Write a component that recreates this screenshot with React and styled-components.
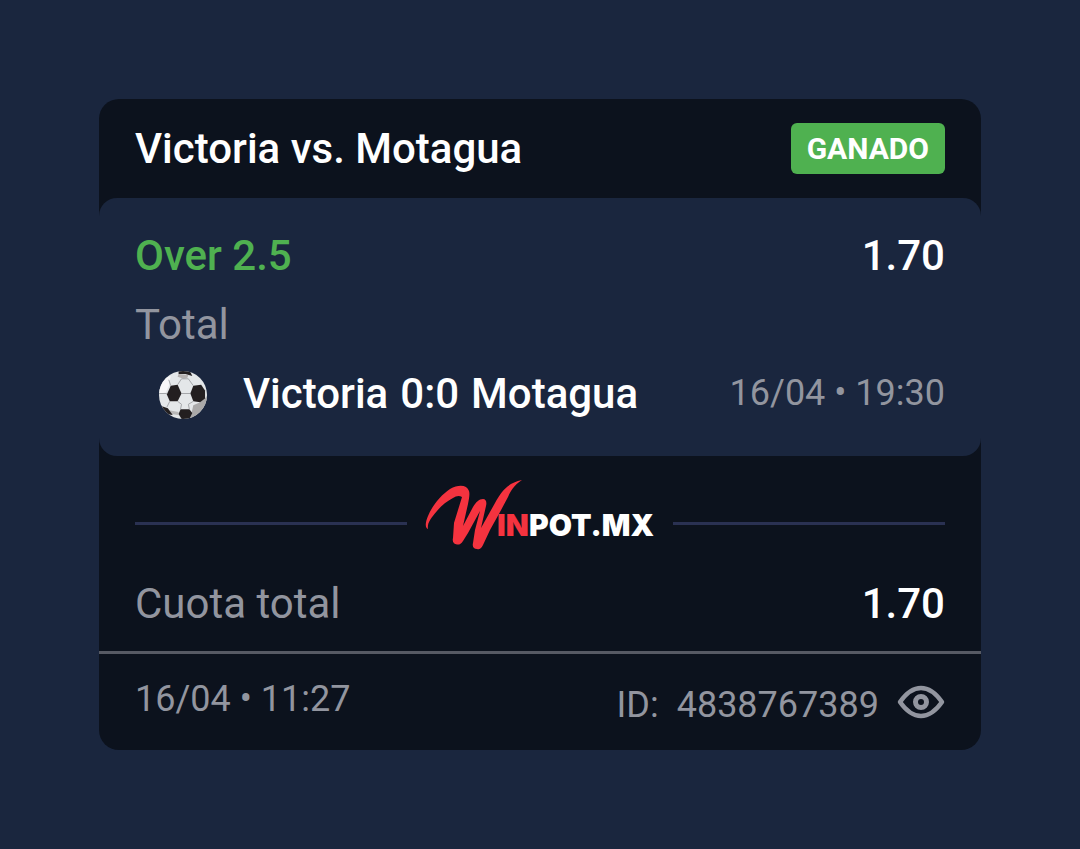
import React from "react";
import styled, { createGlobalStyle } from "styled-components";

const GlobalStyles = createGlobalStyle`
  :root {
    --bg: #1a263e;
    --dark: #0c121d;
    --green: #4fb150;
    --muted: #92959f;
    --rule: #575a64;
    --line: #2a3152;
  }

  * {
    box-sizing: border-box;
  }

  body {
    margin: 0;
    background-color: var(--bg);
    color: white;
    font-family: Roboto, "Liberation Sans", sans-serif;
  }
`;

const Page = styled.main`
  min-height: 100vh;
  padding: 99px;
`;

const Card = styled.article`
  border-radius: 20px;
  background-color: var(--dark);
  overflow: hidden;
`;

const Row = styled.div`
  display: flex;
  align-items: center;
  justify-content: space-between;
`;

const Header = styled(Row)`
  padding: 24px 36px;
`;

const Title = styled.h1`
  margin: 0;
  font-size: 42px;
  line-height: 48px;
  font-weight: 500;
`;

const Badge = styled.span`
  padding: 8px 16px;
  border-radius: 6px;
  background-color: var(--green);
  font-size: 30px;
  line-height: 35px;
  font-weight: 700;
`;

const Selection = styled.section`
  display: flex;
  flex-direction: column;
  gap: 21px;
  padding: 34px 36px 38px;
  border-radius: 18px;
  background-color: var(--bg);
`;

const Label = styled.span`
  color: ${({ $color }) => $color || "white"};
  font-size: 42px;
  line-height: 48px;
  font-weight: ${({ $light }) => ($light ? 400 : 500)};
`;

const Small = styled.span`
  color: var(--muted);
  font-size: 36px;
  line-height: 46px;
`;

const MatchRow = styled(Row)`
  align-items: flex-start;
`;

const Match = styled.div`
  display: flex;
  align-items: center;
  gap: 36px;
  padding-left: 24px;
`;

const Teams = styled.div`
  display: flex;
  gap: 12px;
`;

const Brand = styled.div`
  display: flex;
  align-items: center;
  gap: 18px;
  padding: 24px 36px 0;

  &::before,
  &::after {
    content: "";
    flex: 1;
    height: 3px;
    background-color: var(--line);
  }
`;

const Totals = styled(Row)`
  padding: 13px 36px 23px;
  border-bottom: 3px solid var(--rule);
`;

const Footer = styled(Row)`
  align-items: flex-start;
  padding: 22px 36px;
`;

const Ticket = styled.div`
  display: flex;
  align-items: center;
  gap: 18px;
  padding-top: 6px;
`;

const EyeButton = styled.button`
  display: flex;
  padding: 0;
  border: none;
  background: none;
  color: var(--muted);
  cursor: pointer;
`;

function Ball() {
  return (
    <svg width="48" height="48" viewBox="0 0 49 49" overflow="visible" aria-hidden="true">
      <defs>
        <clipPath id="ball">
          <circle cx="24.5" cy="25.5" r="24.5" />
        </clipPath>
      </defs>
      <g clipPath="url(#ball)">
        <rect width="49" height="50" fill="#e4e7e9" />
        <path d="M0 10L12 6L10 16L7 23L0 24Z" fill="#f7f7f8" />
        <path d="M35 36L42 33L49 27V49H30L33 45Z" fill="#aaa9a9" />
        <path d="M20 4L30 5L29 8L25 9L19 7Z" fill="#b5b1b0" />
        <path d="M10 41L20 43L20 46L12 45Z" fill="#b9b8b8" />
        <g fill="#231f20">
          <path d="M12 16L19 15L23 24L19 32L11 32L8 25Z" />
          <path d="M35 16L43 15L47 21L47 29L42 33L35 32L32 24Z" />
          <path d="M22 40L31 40L34 44L31 50H23L20 45Z" />
          <path d="M20 0H31L34 6L27 4L20 4Z" />
          <path d="M3 37L9 39L14 46L6 45Z" />
        </g>
        <path
          d="M19 15L23 9H30L35 16M23 24H32M19 32L23 35L22 40M35 32L30 35L31 40M11 32L8 38M12 16L10 10M0 24H8"
          fill="none"
          stroke="#a3a5a8"
          strokeWidth="1"
        />
      </g>
    </svg>
  );
}

function Logo() {
  return (
    <svg width="230" height="87" viewBox="0 0 230 87" role="img" aria-label="Winpot.mx">
      <path
        d="M3 49C0 48 0 43 3 36C7 26 16 15 25 9C34 4 42 5 44 11C45 14 44 19 43 24L38 46L48 27C51 22 54 19 58 19C61 19 62 22 61 26L56 48L70 23C76 12 82 3 97 0C89 5 85 12 83 17L75 32L65 50L58 65C56 69 54 70 52 69C49 69 47 67 48 63L50 50L55 31L43 53L38 61C36 64 34 65 32 64.500C29 64 27 62 28 58L29 43L37 17C34 15 31 16 28 18C22 21 16 26 12 31C6 38 2 43 3 49Z"
        fill="#f5333f"
      />
      <text y="56" fontFamily="Inter, sans-serif" fontWeight="900" fontSize="30">
        <tspan x="72" fill="#f5333f">IN</tspan>
        <tspan x="104" fill="white">POT.MX</tspan>
      </text>
    </svg>
  );
}

function Eye() {
  return (
    <svg width="48" height="41" viewBox="0 0 48 41" fill="none" stroke="currentColor" aria-hidden="true">
      <path
        d="M3 17C9 8.500 15.500 3 24 3S39 8.500 45 17C39 25.500 32.500 31 24 31S9 25.500 3 17Z"
        strokeWidth="4.500"
        strokeLinejoin="round"
      />
      <circle cx="24" cy="17" r="5.500" strokeWidth="5" />
    </svg>
  );
}

function App() {
  return (
    <Page>
      <GlobalStyles />
      <Card>
        <Header>
          <Title>Victoria vs. Motagua</Title>
          <Badge>GANADO</Badge>
        </Header>
        <Selection>
          <Row>
            <Label $color="var(--green)">Over 2.5</Label>
            <Label>1.70</Label>
          </Row>
          <Label $light $color="var(--muted)">
            Total
          </Label>
          <MatchRow>
            <Match>
              <Ball />
              <Teams>
                <Label>Victoria</Label>
                <Label>0:0</Label>
                <Label>Motagua</Label>
              </Teams>
            </Match>
            <Small>16/04 • 19:30</Small>
          </MatchRow>
        </Selection>
        <Brand>
          <Logo />
        </Brand>
        <Totals>
          <Label $light $color="var(--muted)">
            Cuota total
          </Label>
          <Label>1.70</Label>
        </Totals>
        <Footer>
          <Small>16/04 • 11:27</Small>
          <Ticket>
            <Small>ID:</Small>
            <Small>4838767389</Small>
            <EyeButton type="button" aria-label="Ver">
              <Eye />
            </EyeButton>
          </Ticket>
        </Footer>
      </Card>
    </Page>
  );
}

export default App;
